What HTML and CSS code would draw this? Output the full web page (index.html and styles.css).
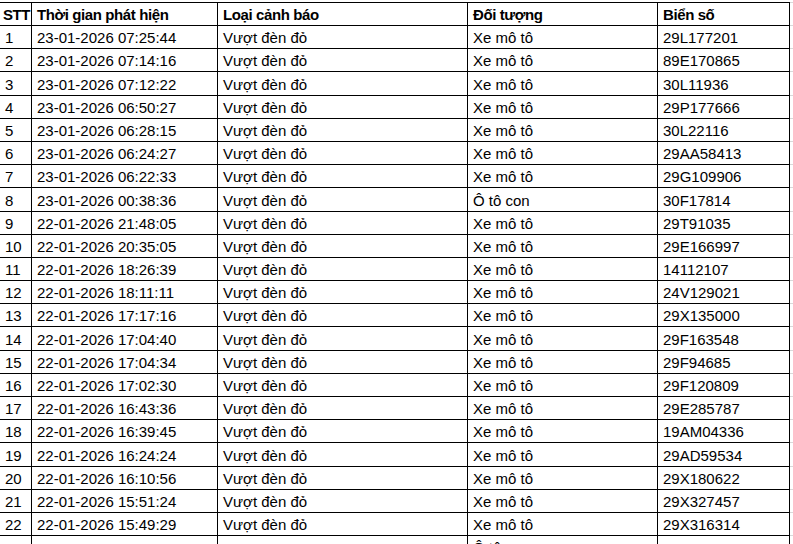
FILE: index.html
```html
<!DOCTYPE html>
<html lang="vi">
<head>
<meta charset="utf-8">
<title>Danh sách cảnh báo</title>
<link rel="stylesheet" href="styles.css">
</head>
<body>
<div class="sheet">
  <div class="c h first">STT</div><div class="c h">Thời gian phát hiện</div><div class="c h">Loại cảnh báo</div><div class="c h">Đối tượng</div><div class="c h">Biển số</div><div class="c fill top"></div>
  <div class="c">1</div><div class="c">23-01-2026 07:25:44</div><div class="c">Vượt đèn đỏ</div><div class="c">Xe mô tô</div><div class="c">29L177201</div><div class="c fill"></div>
  <div class="c">2</div><div class="c">23-01-2026 07:14:16</div><div class="c">Vượt đèn đỏ</div><div class="c">Xe mô tô</div><div class="c">89E170865</div><div class="c fill"></div>
  <div class="c">3</div><div class="c">23-01-2026 07:12:22</div><div class="c">Vượt đèn đỏ</div><div class="c">Xe mô tô</div><div class="c">30L11936</div><div class="c fill"></div>
  <div class="c">4</div><div class="c">23-01-2026 06:50:27</div><div class="c">Vượt đèn đỏ</div><div class="c">Xe mô tô</div><div class="c">29P177666</div><div class="c fill"></div>
  <div class="c">5</div><div class="c">23-01-2026 06:28:15</div><div class="c">Vượt đèn đỏ</div><div class="c">Xe mô tô</div><div class="c">30L22116</div><div class="c fill"></div>
  <div class="c">6</div><div class="c">23-01-2026 06:24:27</div><div class="c">Vượt đèn đỏ</div><div class="c">Xe mô tô</div><div class="c">29AA58413</div><div class="c fill"></div>
  <div class="c">7</div><div class="c">23-01-2026 06:22:33</div><div class="c">Vượt đèn đỏ</div><div class="c">Xe mô tô</div><div class="c">29G109906</div><div class="c fill"></div>
  <div class="c">8</div><div class="c">23-01-2026 00:38:36</div><div class="c">Vượt đèn đỏ</div><div class="c">Ô tô con</div><div class="c">30F17814</div><div class="c fill"></div>
  <div class="c">9</div><div class="c">22-01-2026 21:48:05</div><div class="c">Vượt đèn đỏ</div><div class="c">Xe mô tô</div><div class="c">29T91035</div><div class="c fill"></div>
  <div class="c">10</div><div class="c">22-01-2026 20:35:05</div><div class="c">Vượt đèn đỏ</div><div class="c">Xe mô tô</div><div class="c">29E166997</div><div class="c fill"></div>
  <div class="c">11</div><div class="c">22-01-2026 18:26:39</div><div class="c">Vượt đèn đỏ</div><div class="c">Xe mô tô</div><div class="c">14112107</div><div class="c fill"></div>
  <div class="c">12</div><div class="c">22-01-2026 18:11:11</div><div class="c">Vượt đèn đỏ</div><div class="c">Xe mô tô</div><div class="c">24V129021</div><div class="c fill"></div>
  <div class="c">13</div><div class="c">22-01-2026 17:17:16</div><div class="c">Vượt đèn đỏ</div><div class="c">Xe mô tô</div><div class="c">29X135000</div><div class="c fill"></div>
  <div class="c">14</div><div class="c">22-01-2026 17:04:40</div><div class="c">Vượt đèn đỏ</div><div class="c">Xe mô tô</div><div class="c">29F163548</div><div class="c fill"></div>
  <div class="c">15</div><div class="c">22-01-2026 17:04:34</div><div class="c">Vượt đèn đỏ</div><div class="c">Xe mô tô</div><div class="c">29F94685</div><div class="c fill"></div>
  <div class="c">16</div><div class="c">22-01-2026 17:02:30</div><div class="c">Vượt đèn đỏ</div><div class="c">Xe mô tô</div><div class="c">29F120809</div><div class="c fill"></div>
  <div class="c">17</div><div class="c">22-01-2026 16:43:36</div><div class="c">Vượt đèn đỏ</div><div class="c">Xe mô tô</div><div class="c">29E285787</div><div class="c fill"></div>
  <div class="c">18</div><div class="c">22-01-2026 16:39:45</div><div class="c">Vượt đèn đỏ</div><div class="c">Xe mô tô</div><div class="c">19AM04336</div><div class="c fill"></div>
  <div class="c">19</div><div class="c">22-01-2026 16:24:24</div><div class="c">Vượt đèn đỏ</div><div class="c">Xe mô tô</div><div class="c">29AD59534</div><div class="c fill"></div>
  <div class="c">20</div><div class="c">22-01-2026 16:10:56</div><div class="c">Vượt đèn đỏ</div><div class="c">Xe mô tô</div><div class="c">29X180622</div><div class="c fill"></div>
  <div class="c">21</div><div class="c">22-01-2026 15:51:24</div><div class="c">Vượt đèn đỏ</div><div class="c">Xe mô tô</div><div class="c">29X327457</div><div class="c fill"></div>
  <div class="c">22</div><div class="c">22-01-2026 15:49:29</div><div class="c">Vượt đèn đỏ</div><div class="c">Xe mô tô</div><div class="c">29X316314</div><div class="c fill"></div>
  <div class="c"></div><div class="c"></div><div class="c"></div><div class="c">Ô tô con</div><div class="c"></div><div class="c fill"></div>
</div>
</body>
</html>
```
FILE: styles.css
```css
html, body {
  margin: 0;
  padding: 0;
  background: #ffffff;
}

body {
  overflow: hidden;
  font-family: "Liberation Sans", Arial, sans-serif;
  font-size: 15px;
  color: #000000;
}

.sheet {
  margin-top: 2px;
  display: grid;
  grid-template-columns: 32px 186px 250px 190px 132px 1fr;
  grid-template-rows: 24px;
  grid-auto-rows: 23.2px;
}

.c {
  box-sizing: border-box;
  border-right: 1px solid #000;
  border-bottom: 1px solid #000;
  padding: 0 0 2px 5px;
  line-height: 17px;
  white-space: nowrap;
  overflow: hidden;
  display: flex;
  align-items: flex-end;
}

.h {
  border-top: 1px solid #000;
  font-weight: bold;
  letter-spacing: -0.4px;
}

.first {
  padding-left: 3px;
}

.fill {
  border-right: none;
  border-bottom-color: #d9d9d9;
}

.fill.top {
  border-top: 1px solid #d9d9d9;
}
```
